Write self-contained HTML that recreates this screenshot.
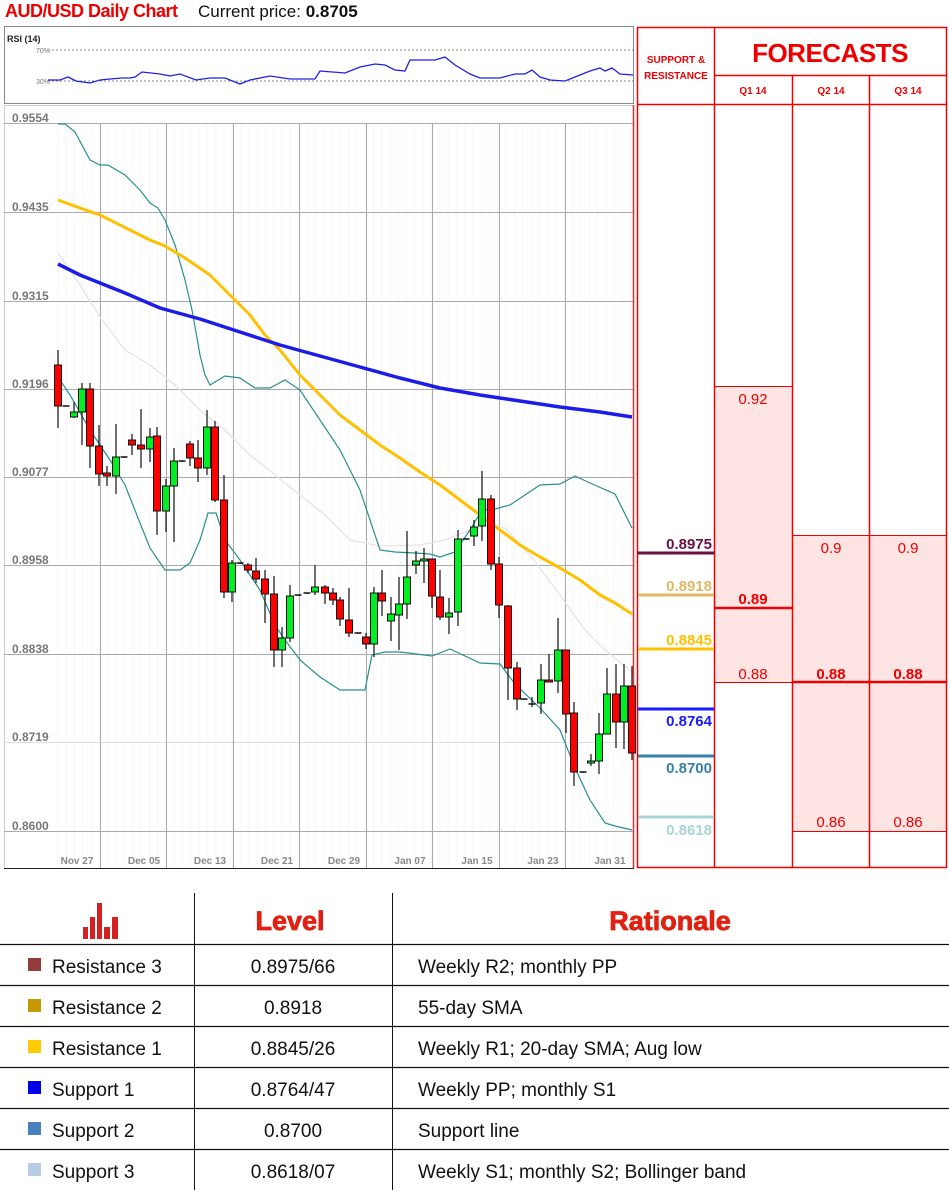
<!DOCTYPE html>
<html><head><meta charset="utf-8"><style>
body{margin:0;background:#fff;width:949px;height:1193px;overflow:hidden;position:relative;font-family:"Liberation Sans",Arial,sans-serif}
.t{position:absolute;white-space:nowrap}
</style></head><body>
<div class="t" style="left:5px;top:1px;font-size:18px;color:#e00;font-weight:bold;letter-spacing:-0.5px">AUD/USD Daily Chart</div>
<div class="t" style="left:198px;top:2px;font-size:17px;color:#111">Current price: <b>0.8705</b></div>

<svg id="ch" width="949" height="1193" style="position:absolute;left:0;top:0" xmlns="http://www.w3.org/2000/svg">
<rect x="4.5" y="26.5" width="629" height="77" fill="#fff" stroke="#888"/>
<text x="7" y="42" font-size="9" font-weight="bold" fill="#222" font-family="Liberation Sans">RSI (14)</text>
<text x="36" y="53" font-size="7" fill="#777" font-family="Liberation Sans">70%</text>
<text x="36" y="84" font-size="7" fill="#777" font-family="Liberation Sans">30%</text>
<line x1="48" y1="50" x2="633" y2="50" stroke="#888" stroke-dasharray="2,2"/>
<line x1="48" y1="81" x2="633" y2="81" stroke="#888" stroke-dasharray="2,2"/>
<polyline fill="none" stroke="#2020e0" stroke-width="1.3" points="48,80 60,80 68,77 76,81 90,83 100,80 110,79 122,78 130,78 135,77 142,72 160,74 170,76 180,74 196,80 210,78 225,78 240,84 250,80 270,76 290,79 305,79 315,79 320,71 345,73 360,67 375,64 385,65 395,70 405,71 410,60 435,60 445,57 455,65 470,74 480,78 500,78 515,74 525,74 532,70 540,77 550,80 565,81 580,75 590,71 600,68 605,71 612,68 620,74 633,75"/>

<rect x="4.5" y="105.5" width="629" height="763" fill="#fff" stroke="#ccc"/>
<g stroke="#f7f7f7" stroke-width="1" id="minor"></g>
<g stroke="#aaa" stroke-width="1">
<line x1="4" y1="123.5" x2="634" y2="123.5"/><line x1="4" y1="212.5" x2="634" y2="212.5"/>
<line x1="4" y1="301.5" x2="634" y2="301.5"/><line x1="4" y1="389.5" x2="634" y2="389.5"/>
<line x1="4" y1="477.5" x2="634" y2="477.5"/><line x1="4" y1="565.5" x2="634" y2="565.5"/>
<line x1="4" y1="654.5" x2="634" y2="654.5"/><line x1="4" y1="742.5" x2="634" y2="742.5" stroke="#ddd"/>
<line x1="4" y1="831.5" x2="634" y2="831.5"/>
<line x1="100.5" y1="123" x2="100.5" y2="868"/><line x1="166.5" y1="123" x2="166.5" y2="868"/>
<line x1="233.5" y1="123" x2="233.5" y2="868"/><line x1="299.5" y1="123" x2="299.5" y2="868"/>
<line x1="366.5" y1="123" x2="366.5" y2="868"/><line x1="432.5" y1="123" x2="432.5" y2="868"/>
<line x1="499.5" y1="123" x2="499.5" y2="868"/><line x1="565.5" y1="123" x2="565.5" y2="868"/>
</g>
<line x1="633.5" y1="105" x2="633.5" y2="868" stroke="#e03030" stroke-width="1.5"/>
<line x1="4" y1="868.5" x2="634" y2="868.5" stroke="#222"/>
<g font-size="12" font-weight="bold" fill="#777" font-family="Liberation Sans">
<text x="12" y="122">0.9554</text><text x="12" y="211">0.9435</text><text x="12" y="300">0.9315</text>
<text x="12" y="388">0.9196</text><text x="12" y="476">0.9077</text><text x="12" y="564">0.8958</text>
<text x="12" y="653">0.8838</text><text x="12" y="741">0.8719</text><text x="12" y="830">0.8600</text>
</g>
<g font-size="10" font-weight="bold" fill="#888" font-family="Liberation Sans" text-anchor="middle">
<text x="77" y="864">Nov 27</text><text x="144" y="864">Dec 05</text><text x="210" y="864">Dec 13</text>
<text x="277" y="864">Dec 21</text><text x="344" y="864">Dec 29</text><text x="410" y="864">Jan 07</text>
<text x="477" y="864">Jan 15</text><text x="543" y="864">Jan 23</text><text x="610" y="864">Jan 31</text>
</g>
<polyline fill="none" stroke="#e4e4e4" stroke-width="1.3" points="58,253 80,285 100,317 125,350 150,365 175,385 200,410 225,430 250,455 275,475 300,495 325,515 350,540 380,546 420,545 445,540 470,530 490,525 505,528 530,555 560,595 585,630 605,650 632,672"/>
<polyline fill="none" stroke="#2a8f8f" stroke-width="1.2" points="58,124 65,124 75,132 90,160 100,165 108,165 125,175 140,190 150,203 158,208 165,220 175,245 185,280 192,310 200,355 205,375 210,385 225,376 240,378 255,388 270,388 285,380 300,390 320,420 340,450 360,490 380,550 395,552 415,553 430,554 440,557 455,552 470,530 482,510 495,509 510,505 540,485 560,484 575,476 590,483 615,494 632,528"/>
<polyline fill="none" stroke="#2a8f8f" stroke-width="1.2" points="60,380 70,395 90,430 110,460 125,485 140,523 150,548 165,570 180,570 190,563 200,540 208,513 216,513 225,540 240,560 260,590 275,625 285,640 300,660 320,677 340,690 365,690 372,655 385,652 400,652 432,656 450,649 465,656 480,663 500,664 515,684 540,708 560,730 575,768 590,800 605,823 615,826 632,830"/>
<polyline fill="none" stroke="#ffc000" stroke-width="3" stroke-linejoin="round" points="58,200 80,208 100,215 130,230 150,240 165,246 185,258 210,275 235,300 250,315 265,335 280,350 300,375 320,395 340,415 360,430 380,445 400,458 420,472 440,485 460,500 480,515 500,530 520,545 540,557 560,568 580,580 600,595 615,603 632,614"/>
<polyline fill="none" stroke="#1c1ce8" stroke-width="3.5" stroke-linejoin="round" points="58,264 80,275 100,283 125,293 160,308 200,319 240,332 280,345 320,356 360,367 400,378 440,388 480,395 520,401 560,407 600,412 632,417"/>
<g id="candles"></g>

<rect x="714" y="386" width="78" height="296" fill="#ffe4e4"/>
<rect x="792" y="535" width="155" height="296" fill="#ffe4e4"/>
<g stroke="#e00" stroke-width="1.5" fill="none">
<rect x="637.5" y="27.5" width="309" height="840"/>
<line x1="714.5" y1="27" x2="714.5" y2="868"/><line x1="792.5" y1="75" x2="792.5" y2="868"/><line x1="869.5" y1="75" x2="869.5" y2="868"/>
<line x1="714" y1="75.5" x2="947" y2="75.5"/><line x1="637" y1="104.5" x2="947" y2="104.5"/>
<line x1="714" y1="386.5" x2="792" y2="386.5" stroke-width="1"/>
<line x1="714" y1="682.5" x2="792" y2="682.5" stroke-width="1"/>
<line x1="792" y1="535.5" x2="947" y2="535.5" stroke-width="1"/>
<line x1="792" y1="831.5" x2="947" y2="831.5" stroke-width="1"/>
<line x1="714" y1="608" x2="792" y2="608" stroke-width="2.5"/>
<line x1="792" y1="682" x2="947" y2="682" stroke-width="2.5"/>
</g>
<g font-family="Liberation Sans" fill="#e00" text-anchor="middle">
<text x="676" y="63" font-size="10" font-weight="bold">SUPPORT &amp;</text>
<text x="676" y="79" font-size="10" font-weight="bold">RESISTANCE</text>
<text x="830" y="62" font-size="26" font-weight="bold" letter-spacing="-0.5">FORECASTS</text>
<text x="753" y="94" font-size="10" font-weight="bold">Q1 14</text>
<text x="831" y="94" font-size="10" font-weight="bold">Q2 14</text>
<text x="908" y="94" font-size="10" font-weight="bold">Q3 14</text>
<g font-size="15"><text x="753" y="404">0.92</text><text x="753" y="679">0.88</text>
<text x="831" y="553">0.9</text><text x="908" y="553">0.9</text>
<text x="831" y="827">0.86</text><text x="908" y="827">0.86</text></g>
<g font-size="15" font-weight="bold"><text x="753" y="604">0.89</text><text x="831" y="679">0.88</text><text x="908" y="679">0.88</text></g>
</g>
<g font-family="Liberation Sans" font-size="15" font-weight="bold" text-anchor="end">
<line x1="638" y1="553" x2="714" y2="553" stroke="#6b1040" stroke-width="3"/><text x="712" y="549" fill="#6b1040">0.8975</text>
<line x1="638" y1="595" x2="714" y2="595" stroke="#e0b868" stroke-width="3"/><text x="712" y="591" fill="#e0b868">0.8918</text>
<line x1="638" y1="649" x2="714" y2="649" stroke="#ffc000" stroke-width="3"/><text x="712" y="645" fill="#ffc000">0.8845</text>
<line x1="638" y1="709" x2="714" y2="709" stroke="#1a1aff" stroke-width="3"/><text x="712" y="726" fill="#1a1aff">0.8764</text>
<line x1="638" y1="756" x2="714" y2="756" stroke="#3a7fa8" stroke-width="3"/><text x="712" y="773" fill="#3a7fa8">0.8700</text>
<line x1="638" y1="817" x2="714" y2="817" stroke="#a8d4d4" stroke-width="3"/><text x="712" y="835" fill="#a8d4d4">0.8618</text>
</g>

<g stroke="#111" stroke-width="1.2">
<line x1="0" y1="944.5" x2="949" y2="944.5"/><line x1="0" y1="985.5" x2="949" y2="985.5"/>
<line x1="0" y1="1026.5" x2="949" y2="1026.5"/><line x1="0" y1="1067.5" x2="949" y2="1067.5"/>
<line x1="0" y1="1108.5" x2="949" y2="1108.5"/><line x1="0" y1="1149.5" x2="949" y2="1149.5"/>
<line x1="194.5" y1="893" x2="194.5" y2="1190" stroke-width="1"/><line x1="392.5" y1="893" x2="392.5" y2="1190" stroke-width="1"/>
</g>
<g fill="#d42020">
<rect x="83" y="927" width="5" height="12"/><rect x="90" y="917" width="5" height="22"/><rect x="97" y="903" width="5" height="36"/><rect x="104" y="927" width="6" height="12"/><rect x="112" y="917" width="6" height="22"/>
</g>
<g font-family="Liberation Sans" font-weight="900" font-size="27" fill="#e02010" text-anchor="middle">
<text x="290" y="930" stroke="#e02010" stroke-width="0.8">Level</text>
<text x="670" y="930" stroke="#e02010" stroke-width="0.8">Rationale</text>
</g>
<rect x="28" y="958" width="13" height="13" fill="#943c3c"/>
<rect x="28" y="999" width="13" height="13" fill="#c89800"/>
<rect x="28" y="1040" width="13" height="13" fill="#ffcc00"/>
<rect x="28" y="1081" width="13" height="13" fill="#0000e8"/>
<rect x="28" y="1122" width="13" height="13" fill="#4a80bc"/>
<rect x="28" y="1163" width="13" height="13" fill="#b8cce4"/>
<g font-family="Liberation Sans" font-size="19" fill="#111">
<text x="52" y="973">Resistance 3</text><text x="52" y="1014">Resistance 2</text><text x="52" y="1055">Resistance 1</text>
<text x="52" y="1096">Support 1</text><text x="52" y="1137">Support 2</text><text x="52" y="1178">Support 3</text>
<g text-anchor="middle"><text x="293" y="973">0.8975/66</text><text x="293" y="1014">0.8918</text><text x="293" y="1055">0.8845/26</text>
<text x="293" y="1096">0.8764/47</text><text x="293" y="1137">0.8700</text><text x="293" y="1178">0.8618/07</text></g>
<text x="418" y="973">Weekly R2; monthly PP</text><text x="418" y="1014">55-day SMA</text>
<text x="418" y="1055">Weekly R1; 20-day SMA; Aug low</text><text x="418" y="1096">Weekly PP; monthly S1</text>
<text x="418" y="1137">Support line</text><text x="418" y="1178">Weekly S1; monthly S2; Bollinger band</text>
</g>
</svg>
<script>
var NS="http://www.w3.org/2000/svg";
var mg=document.getElementById("minor");
for(var x=58;x<634;x+=8.3){var l=document.createElementNS(NS,"line");l.setAttribute("x1",x.toFixed(1));l.setAttribute("x2",x.toFixed(1));l.setAttribute("y1",123);l.setAttribute("y2",868);mg.appendChild(l);}
var C=[[58,365,406,350,428,0],[66,406,407,406,406,2],[74,412,417,402,418,1],[82,389,412,383,445,1],[90,389,446,383,468,0],[99,446,474,425,486,0],[107,473,476,466,486,0],[116,457,476,424,494,1],[124,457,458,457,458,2],[132,440,445,434,455,0],[141,445,449,409,468,0],[150,437,449,428,462,1],[157,436,511,427,535,0],[166,486,511,479,532,1],[174,461,486,448,542,1],[182,461,462,461,462,2],[190,444,458,441,466,0],[198,458,468,440,482,0],[207,427,468,410,475,1],[215,427,500,421,502,0],[224,500,592,475,598,0],[232,563,592,560,602,1],[240,563,564,563,564,2],[248,565,570,563,573,0],[256,571,579,558,583,0],[265,579,594,570,623,0],[274,594,650,576,667,0],[282,638,650,627,667,1],[290,596,638,585,642,1],[298,595,596,595,596,2],[307,593,594,593,594,2],[315,587,592,565,595,1],[325,587,593,585,604,0],[333,593,600,588,605,0],[340,600,619,597,626,0],[349,620,633,588,637,0],[358,633,634,633,634,2],[366,637,644,633,649,0],[374,593,644,587,657,1],[382,593,601,570,616,0],[391,614,621,597,641,1],[399,604,615,577,650,1],[407,577,604,531,619,1],[416,561,565,551,574,1],[424,559,561,548,583,1],[432,559,596,564,608,0],[440,597,617,570,620,0],[449,613,617,598,634,1],[458,539,612,530,626,1],[466,539,540,539,540,2],[474,527,536,520,546,1],[482,499,526,471,541,1],[491,499,564,495,570,0],[499,564,605,557,618,0],[508,606,668,605,700,0],[517,668,699,662,710,0],[524,699,700,699,700,2],[532,704,705,697,707,2],[541,680,703,664,714,1],[549,680,681,654,681,0],[558,650,681,618,693,1],[566,650,714,650,733,0],[574,713,772,702,786,0],[583,772,773,772,773,2],[591,761,763,754,766,1],[599,734,761,713,774,1],[607,694,734,668,734,1],[616,694,722,664,748,0],[624,686,722,664,749,1],[632,686,753,666,760,0]];
var g=document.getElementById("candles");
C.forEach(function(c){var w=document.createElementNS(NS,"line");w.setAttribute("x1",c[0]);w.setAttribute("x2",c[0]);w.setAttribute("y1",c[3]);w.setAttribute("y2",c[4]);w.setAttribute("stroke","#111");w.setAttribute("stroke-width","1.2");g.appendChild(w);
if(c[5]==2){var d=document.createElementNS(NS,"line");d.setAttribute("x1",c[0]-3.5);d.setAttribute("x2",c[0]+3.5);d.setAttribute("y1",c[1]);d.setAttribute("y2",c[1]);d.setAttribute("stroke","#111");d.setAttribute("stroke-width","1.5");g.appendChild(d);return;}
var r=document.createElementNS(NS,"rect");r.setAttribute("x",c[0]-3.5);r.setAttribute("y",c[1]);r.setAttribute("width",7);r.setAttribute("height",Math.max(2,c[2]-c[1]));r.setAttribute("fill",c[5]?"#00ee22":"#ff0000");r.setAttribute("stroke","#111");r.setAttribute("stroke-width","1");g.appendChild(r);});
</script>
</body></html>
